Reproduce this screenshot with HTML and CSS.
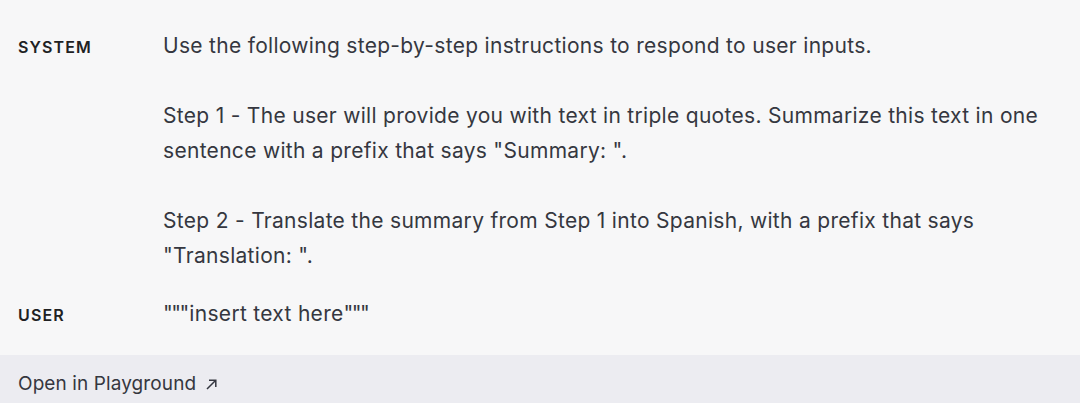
FILE: index.html
```html
<html>
  <head>
    <title>Prompt example</title>
    <link rel="stylesheet" href="styles.css">
  </head>
  <body>
    <div class="card">
      <div class="messages">
        <div class="row">
          <div class="role">SYSTEM</div>
          <div class="content">
            <p>Use the following step-by-step instructions to respond to user inputs.</p>
            <p>Step 1 - The user will provide you with text in triple quotes. Summarize this text in one sentence with a prefix that says "Summary: ".</p>
            <p>Step 2 - Translate the summary from Step 1 into Spanish, with a prefix that says "Translation: ".</p>
          </div>
        </div>
        <div class="row">
          <div class="role">USER</div>
          <div class="content">
            <p><span class="quotes">"""</span>insert text here<span class="quotes">"""</span></p>
          </div>
        </div>
      </div>
      <div class="footer">
        <a class="open" href="#">Open in Playground<svg class="arrow" width="11" height="11" viewBox="0 0 11 11"><path d="M1 10 L9.5 1.5 M3 1.2 H9.8 V8" fill="none" stroke="#353740" stroke-width="1.5"/></svg></a>
      </div>
    </div>
  </body>
</html>
```

FILE: styles.css
```css
body {
    margin: 0;
    background: #f7f7f8;
    font-family: Inter, "Noto Sans", sans-serif;
    color: #353740;
}
.card { background: #f7f7f8; }
.messages { padding: 16px 0 11px; }
.row {
    display: grid;
    grid-template-columns: 145px 1fr;
    align-items: baseline;
    padding: 12px 18px 11px;
}
.role {
    font-size: 16px;
    font-weight: 600;
    letter-spacing: 0.07em;
    line-height: 35px;
    color: #202123;
}
.content {
    font-size: 21px;
    letter-spacing: 0.3px;
    line-height: 35px;
}
.content p { margin: 0 0 35px; }
.content p:last-child { margin-bottom: 0; }
.quotes { letter-spacing: -1.5px; margin-right: 1.5px; }
.footer {
    background: #ececf1;
    padding: 15px 18px 20px;
}
.open {
    color: #353740;
    text-decoration: none;
    font-size: 19px;
    line-height: 28px;
    letter-spacing: 0.1px;
}
.arrow { margin-left: 10px; }
```
